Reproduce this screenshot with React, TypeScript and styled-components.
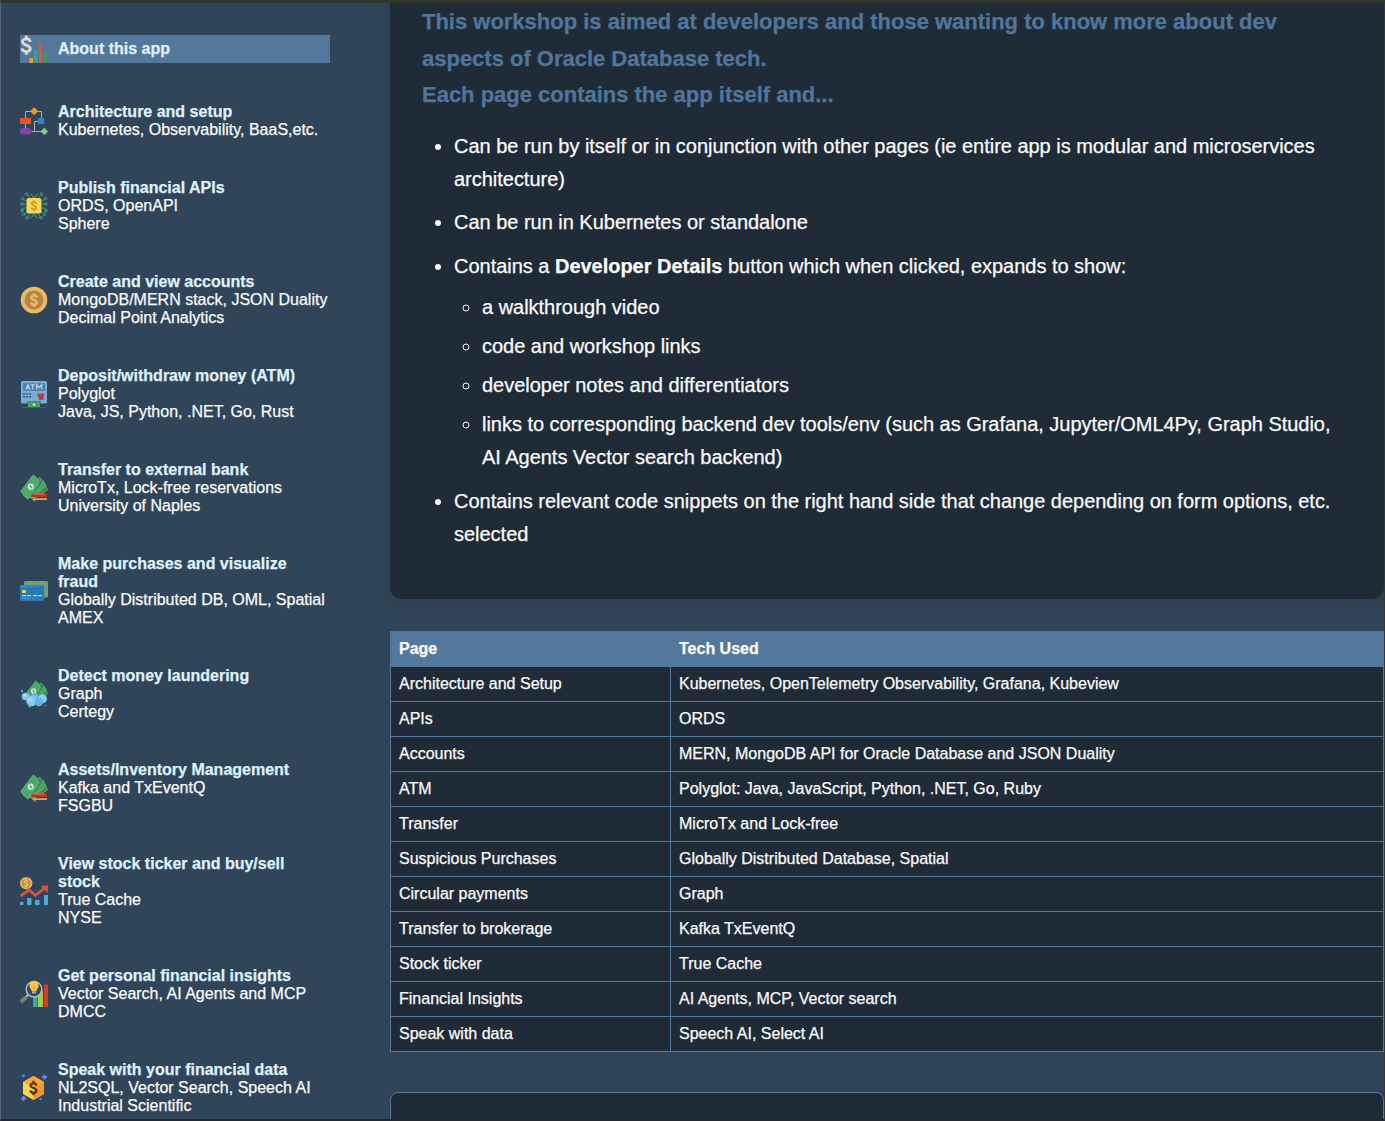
import React from "react";
import styled, { createGlobalStyle } from "styled-components";

const GlobalStyle = createGlobalStyle`
  *, *::before, *::after { box-sizing: border-box; }
  html, body { margin: 0; padding: 0; overflow: hidden; background: #304559; }
  body {
    font-family: "Liberation Sans", Helvetica, Arial, sans-serif;
    font-size: 16px;
    line-height: 18px;
    color: #fafafa;
    -webkit-text-stroke: 0.25px;
  }
  ul { margin: 0; padding: 0; }
`;

const Page = styled.div`
  display: grid;
  grid-template-columns: 369px 1fr;
  height: 1121px;
  overflow: hidden;
  background: #304559;
  border-style: solid;
  border-width: 3px 1px 2px 1px;
  border-color: #30362b #35383b #29292c #566673;
`;

const Sidebar = styled.nav`
  display: flex;
  flex-direction: column;
  gap: 40px;
  padding: 32px 40px 0 19px;
  min-height: 0;
`;

const NavItem = styled.a<{ $active?: boolean }>`
  display: flex;
  flex-shrink: 0;
  align-items: center;
  gap: 10px;
  width: 310px;
  min-height: 28px;
  background: ${(p) => (p.$active ? "#54789c" : "transparent")};
  svg { flex: none; display: block; }
`;

const NavText = styled.div`
  display: flex;
  flex-direction: column;
  white-space: nowrap;
`;

const NavTitle = styled.strong`
  color: #dff0ff;
  white-space: pre-line;
`;

const Main = styled.main`
  display: flex;
  flex-direction: column;
  min-width: 0;
  min-height: 0;
  margin-left: 20px;
`;

const Card = styled.section`
  flex: none;
  height: 596px;
  padding: 1px 32px 0;
  border-radius: 0 0 12px 12px;
  background: #202b38;
  box-shadow: 0 4px 20px rgba(50, 50, 40, 0.32);
`;

const Intro = styled.h2`
  margin: 0;
  font-size: 22px;
  line-height: 36.5px;
  font-weight: 700;
  letter-spacing: -0.01px;
  color: #50769c;
  white-space: nowrap;
`;

const Bullets = styled.ul`
  margin-top: 16px;
  padding-left: 32px;
  font-size: 20px;
  line-height: 33px;
  letter-spacing: -0.02px;
  list-style: disc;
  white-space: nowrap;
  > li { margin-bottom: 10.6px; }
  > li:last-child { margin-top: 11.2px; }
`;

const SubBullets = styled.ul`
  margin-top: 8px;
  padding-left: 28px;
  list-style: circle;
  > li { margin-bottom: 6px; }
  > li:last-child { margin-bottom: 0; letter-spacing: -0.03px; }
`;

const TechTable = styled.table`
  flex: none;
  width: 994px;
  margin-top: 32px;
  table-layout: fixed;
  border-collapse: collapse;
  background: #202b38;
  th, td {
    height: 35px;
    padding: 8px;
    border: 1px solid #54789c;
    text-align: left;
    line-height: 18px;
  }
  th { background: #54789c; }
  th:first-child { width: 280px; }
`;

const Panel = styled.section`
  flex: none;
  height: 80px;
  margin-top: 40px;
  border: 1px solid #54789c;
  border-radius: 8px;
  background: #202b38;
`;

const Svg = ({ children }: { children: React.ReactNode }) => (
  <svg width="28" height="28" viewBox="0 0 28 28" fill="none">{children}</svg>
);

type DollarProps = { x: number; y: number; size: number; color: string; weight?: number };

const Dollar = ({ x, y, size, color, weight = 3.4 }: DollarProps) => (
  <g transform={`translate(${x} ${y}) scale(${size / 20})`} stroke={color} fill="none" strokeWidth={weight}>
    <path d="M4.600-3.800C4-8.300-4.400-8.300-4.400-4C-4.400 .3 4.600-.5 4.600 4C4.600 8.600-4.200 8.600-4.800 3.600M0-11v4M0 7v4" />
  </g>
);

const AboutIcon = () => (
  <Svg>
    <Dollar x={6.3} y={10.2} size={17.5} color="#dedad8" weight={3.2} />
    <rect x="9.500" y="23" width="3.500" height="5" fill="#f0a030" />
    <rect x="14" y="15" width="3.500" height="13" fill="#3a9d9c" />
    <rect x="19" y="8" width="3.200" height="20" fill="#e8522a" />
    <rect x="24" y="18" width="3.200" height="10" fill="#3b9d5b" />
  </Svg>
);

const ArchitectureIcon = () => (
  <Svg>
    <path d="M5.500 13V4.500h16V13M5.500 16v8.500M21 14.500h-6.500v10M8 24.500h14" stroke="#a9b1b8" strokeWidth="1" />
    <path d="m14.200.2 4 4-4 4-4-4z" fill="#ec9932" />
    <rect x="0" y="11" width="11" height="6" fill="#e5532a" />
    <rect x="18.200" y="11" width="6" height="6" fill="#2f83c5" />
    <rect x="0" y="21.200" width="11.500" height="6.200" rx="3.100" fill="#8146a3" />
    <path d="m24.300 20.700 3.700 3.700-3.700 3.700-3.700-3.700z" fill="#82d08d" />
  </Svg>
);

const ApiIcon = () => (
  <Svg>
    <g stroke="#3ea37e" strokeWidth="1">
      <path d="M10 6 7 2.500M13 6V4l-3-2M15 6V4l3-2M18 6l3-3.500M6 9 3 7M6 12H3M6 16H3l-1 3M7 20l-3 2M22 9l3-2M22 12h3M22 16h3l1 3M21 20l3 2M10 22l-3 3.500M13 22v2l-3 2M15 22v2l3 2M18 22l3 3.500" />
      <circle cx="6.500" cy="2" r="1.300" />
      <circle cx="21.500" cy="2" r="1.300" />
      <circle cx="2.400" cy="6.500" r="1.300" />
      <circle cx="25.600" cy="6.500" r="1.300" />
      <circle cx="2" cy="12" r="1.300" />
      <circle cx="26" cy="12" r="1.300" />
      <circle cx="2" cy="18.500" r="1.300" />
      <circle cx="26" cy="18.500" r="1.300" />
      <circle cx="3.500" cy="22.500" r="1.300" />
      <circle cx="24.500" cy="22.500" r="1.300" />
      <circle cx="7" cy="25.800" r="1.300" />
      <circle cx="21" cy="25.800" r="1.300" />
    </g>
    <rect x="6.500" y="6" width="15" height="15.500" rx="2.500" fill="#f8d552" />
    <Dollar x={14} y={13.7} size={10} color="#c79a25" />
  </Svg>
);

const CoinIcon = () => (
  <Svg>
    <circle cx="14" cy="14" r="13.300" fill="#e9bc62" />
    <circle cx="14" cy="14" r="9.500" fill="#b98448" />
    <Dollar x={14} y={14} size={12.5} color="#edc166" />
  </Svg>
);

const AtmIcon = () => (
  <Svg>
    <rect x="1" y="1" width="26" height="22.500" rx="1.500" fill="#78add5" />
    <rect x="3" y="3" width="22" height="8" rx="1" fill="#557fa9" />
    <path d="m6 9.500 2-5 2 5M6.800 8h2.400M10.500 4.700h4.500M12.700 5v4.500M16.700 9.500v-5l2.500 3.300 2.500-3.300v5" stroke="#b8d9f2" strokeWidth="1.100" />
    <g fill="#355a8a">
      <rect x="3" y="13.300" width="2.200" height="1.500" />
      <rect x="6" y="13.300" width="2.200" height="1.500" />
      <rect x="9" y="13.300" width="2.200" height="1.500" />
      <rect x="3" y="16" width="2.200" height="1.500" />
      <rect x="6" y="16" width="2.200" height="1.500" />
      <rect x="9" y="16" width="2.200" height="1.500" />
    </g>
    <path d="M17 13.500h7.500l-1 6.500h-4.500z" fill="#c94b4e" />
    <path d="m19 14 1.300 4M22.500 14l-1 5" stroke="#8d3342" />
    <rect x="6.500" y="21.500" width="14.500" height="1" fill="#365278" />
    <rect x="8" y="22.500" width="12" height="4.500" fill="#45a266" />
    <circle cx="14" cy="24.700" r="1.400" fill="#c4e8c9" />
    <path d="M1.500 27.500h25" stroke="#53697d" strokeWidth=".7" />
  </Svg>
);

const BillFan = () => (
  <g stroke="#7cc994" strokeWidth=".6" strokeLinejoin="round">
    <path d="M9 23 25.500 11.500l2 4.500-13 8z" fill="#358c50" />
    <path d="M8 22 23 6.500l3 5.300L12 24z" fill="#46a463" />
    <path d="m7 20 12.500-17 4 5L11 24z" fill="#358c50" />
    <path d="M13.300.8Q17.500 3.500 19 8.500L8 25.200Q3.500 22.500.8 17.200z" fill="#4baa69" />
    <ellipse cx="10.800" cy="12.800" rx="3.100" ry="3.300" fill="#c3e5cb" stroke="none" />
    <path d="m10 11.300 1.800 3" stroke="#3b9556" strokeWidth="1.200" />
  </g>
);

const TransferIcon = () => (
  <Svg>
    <BillFan />
    <path d="M11.500 20.500H27V23H11.500z" fill="#a93a2c" />
    <path d="m22 18.300 5 2.700H12z" fill="#de5339" />
    <path d="M12.500 24.200H27V26H12.500z" fill="#dba93c" />
    <path d="m11.500 24.200 5 3.300-2-.2z" fill="#f0c04b" />
  </Svg>
);

const CardsIcon = () => (
  <Svg>
    <rect x="4" y="4" width="24" height="16.500" rx="1.500" fill="#769c78" />
    <rect x="0" y="8" width="24" height="16" rx="1.300" fill="#2779b7" />
    <path d="M0 11.300V9.500Q0 8 1.500 8h21Q24 8 24 9.500z" fill="#3388c5" />
    <rect x="2" y="13" width="4" height="3" rx=".5" fill="#f3ca57" />
    <path d="M2 18.700h4M7 18.700h4M13 18.700h4M18 18.700h4" stroke="#b7daf0" strokeWidth="1.300" />
    <path d="M2 21.500h8M12 21.500h3" stroke="#5ba3d5" strokeWidth=".8" />
  </Svg>
);

const LaunderIcon = () => (
  <Svg>
    <g transform="translate(4.500 .3) scale(.84)"><BillFan /></g>
    <circle cx="5.500" cy="16.500" r="3.800" fill="#80c6ef" />
    <circle cx="14.500" cy="16.300" r="3.300" fill="#6fb9e8" />
    <circle cx="22.500" cy="18.800" r="4.500" fill="#8accf3" />
    <circle cx="11.500" cy="21" r="5.300" fill="#84caf2" />
    <circle cx="18.800" cy="22" r="4.300" fill="#65b4e5" />
    <circle cx="4.700" cy="15.500" r="1.500" fill="#b4e1fa" />
    <circle cx="10" cy="20" r="2" fill="#a8daf7" />
    <g fill="#75bce8"><circle cx="2" cy="11" r="1" /><circle cx="9.500" cy="26.500" r="1" /><circle cx="25.500" cy="25.500" r=".7" /></g>
  </Svg>
);

const StockIcon = () => (
  <Svg>
    <circle cx="6.200" cy="6.200" r="6.200" fill="#e5b257" />
    <circle cx="6.200" cy="6.200" r="4.300" fill="#c28a43" />
    <Dollar x={6.2} y={6.2} size={7} color="#efc772" />
    <path d="m.5 18.800 9-6 5.700 5.700L26 10" stroke="#df563f" strokeWidth="2.600" />
    <path d="m20.500 9 7.300-.8V16z" fill="#df563f" />
    <g fill="#51a8df">
      <rect x="0" y="25" width="3.500" height="3" />
      <rect x="7" y="21" width="4.500" height="7" />
      <rect x="15" y="23" width="4.500" height="5" />
      <rect x="24" y="18" width="4" height="10" />
    </g>
  </Svg>
);

const InsightIcon = () => (
  <Svg>
    <rect x="13" y="14" width="4.500" height="13" fill="#38a8ad" />
    <rect x="18" y="11" width="5" height="16" fill="#a7c947" />
    <rect x="24" y="4.500" width="4" height="22.500" fill="#d63b32" />
    <circle cx="14" cy="9.300" r="7.800" fill="#34495d" stroke="#b7bfc6" strokeWidth="1.500" />
    <path d="m8 15-2 2" stroke="#b7bfc6" strokeWidth="2" />
    <path d="m.8 22 5.700-5" stroke="#7d7d7d" strokeWidth="4" />
    <path d="M14 .8A4.800 4.800 0 0 0 10.800 9l1 2.200h4.400l1-2.200A4.800 4.800 0 0 0 14 .8z" fill="#f9c846" />
    <path d="M12 11.200h4v2.300h-4z" fill="#a8adb0" />
    <path d="M12.500 6.500 14 8l1.500-1.500M14 8v3" stroke="#d58d2f" strokeWidth=".8" />
  </Svg>
);

const SpeakIcon = () => (
  <Svg>
    <path d="m13.500 2 10.500 6v12l-10.500 6L3 20V8z" fill="#fcd34a" />
    <path d="M13.500 2 24 8l-10.500 6L3 8z" fill="#f8a832" />
    <path d="M24 8v12l-10.500 6V14z" fill="#f4952d" />
    <Dollar x={13.5} y={14} size={13} color="#50351c" />
    <g stroke="#7185fa" strokeWidth="1.800">
      <path d="M24.500 .5v5M22 3h5M3.500 22v5M1 24.500h5" />
    </g>
    <circle cx="3.500" cy="1.800" r="1.500" fill="#6680ef" />
    <circle cx="20.500" cy="25" r="1.200" fill="#6680ef" />
  </Svg>
);

type Nav = { icon: React.FC; title: string; lines: string[]; active?: boolean };

const NAV: Nav[] = [
  { icon: AboutIcon, title: "About this app", lines: [], active: true },
  { icon: ArchitectureIcon, title: "Architecture and setup", lines: ["Kubernetes, Observability, BaaS,etc."] },
  { icon: ApiIcon, title: "Publish financial APIs", lines: ["ORDS, OpenAPI", "Sphere"] },
  { icon: CoinIcon, title: "Create and view accounts", lines: ["MongoDB/MERN stack, JSON Duality", "Decimal Point Analytics"] },
  { icon: AtmIcon, title: "Deposit/withdraw money (ATM)", lines: ["Polyglot", "Java, JS, Python, .NET, Go, Rust"] },
  { icon: TransferIcon, title: "Transfer to external bank", lines: ["MicroTx, Lock-free reservations", "University of Naples"] },
  { icon: CardsIcon, title: "Make purchases and visualize\nfraud", lines: ["Globally Distributed DB, OML, Spatial", "AMEX"] },
  { icon: LaunderIcon, title: "Detect money laundering", lines: ["Graph", "Certegy"] },
  { icon: TransferIcon, title: "Assets/Inventory Management", lines: ["Kafka and TxEventQ", "FSGBU"] },
  { icon: StockIcon, title: "View stock ticker and buy/sell\nstock", lines: ["True Cache", "NYSE"] },
  { icon: InsightIcon, title: "Get personal financial insights", lines: ["Vector Search, AI Agents and MCP", "DMCC"] },
  { icon: SpeakIcon, title: "Speak with your financial data", lines: ["NL2SQL, Vector Search, Speech AI", "Industrial Scientific"] },
];

const ROWS: [string, string][] = [
  ["Architecture and Setup", "Kubernetes, OpenTelemetry Observability, Grafana, Kubeview"],
  ["APIs", "ORDS"],
  ["Accounts", "MERN, MongoDB API for Oracle Database and JSON Duality"],
  ["ATM", "Polyglot: Java, JavaScript, Python, .NET, Go, Ruby"],
  ["Transfer", "MicroTx and Lock-free"],
  ["Suspicious Purchases", "Globally Distributed Database, Spatial"],
  ["Circular payments", "Graph"],
  ["Transfer to brokerage", "Kafka TxEventQ"],
  ["Stock ticker", "True Cache"],
  ["Financial Insights", "AI Agents, MCP, Vector search"],
  ["Speak with data", "Speech AI, Select AI"],
];

export default function App() {
  return (
    <>
      <GlobalStyle />
      <Page>
        <Sidebar>
          {NAV.map(({ icon: Icon, title, lines, active }) => (
            <NavItem key={title} $active={active}>
              <Icon />
              <NavText>
                <NavTitle>{title}</NavTitle>
                {lines.map((text) => (
                  <span key={text}>{text}</span>
                ))}
              </NavText>
            </NavItem>
          ))}
        </Sidebar>
        <Main>
          <Card>
            <Intro>
              This workshop is aimed at developers and those wanting to know more about dev
              <br />
              aspects of Oracle Database tech.
              <br />
              Each page contains the app itself and...
            </Intro>
            <Bullets>
              <li>
                Can be run by itself or in conjunction with other pages (ie entire app is modular and microservices
                <br />
                architecture)
              </li>
              <li>Can be run in Kubernetes or standalone</li>
              <li>
                Contains a <strong>Developer Details</strong> button which when clicked, expands to show:
                <SubBullets>
                  <li>a walkthrough video</li>
                  <li>code and workshop links</li>
                  <li>developer notes and differentiators</li>
                  <li>
                    links to corresponding backend dev tools/env (such as Grafana, Jupyter/OML4Py, Graph Studio,
                    <br />
                    AI Agents Vector search backend)
                  </li>
                </SubBullets>
              </li>
              <li>
                Contains relevant code snippets on the right hand side that change depending on form options, etc.
                <br />
                selected
              </li>
            </Bullets>
          </Card>
          <TechTable>
            <thead>
              <tr><th>Page</th><th>Tech Used</th></tr>
            </thead>
            <tbody>
              {ROWS.map(([page, tech]) => (
                <tr key={page}><td>{page}</td><td>{tech}</td></tr>
              ))}
            </tbody>
          </TechTable>
          <Panel />
        </Main>
      </Page>
    </>
  );
}
